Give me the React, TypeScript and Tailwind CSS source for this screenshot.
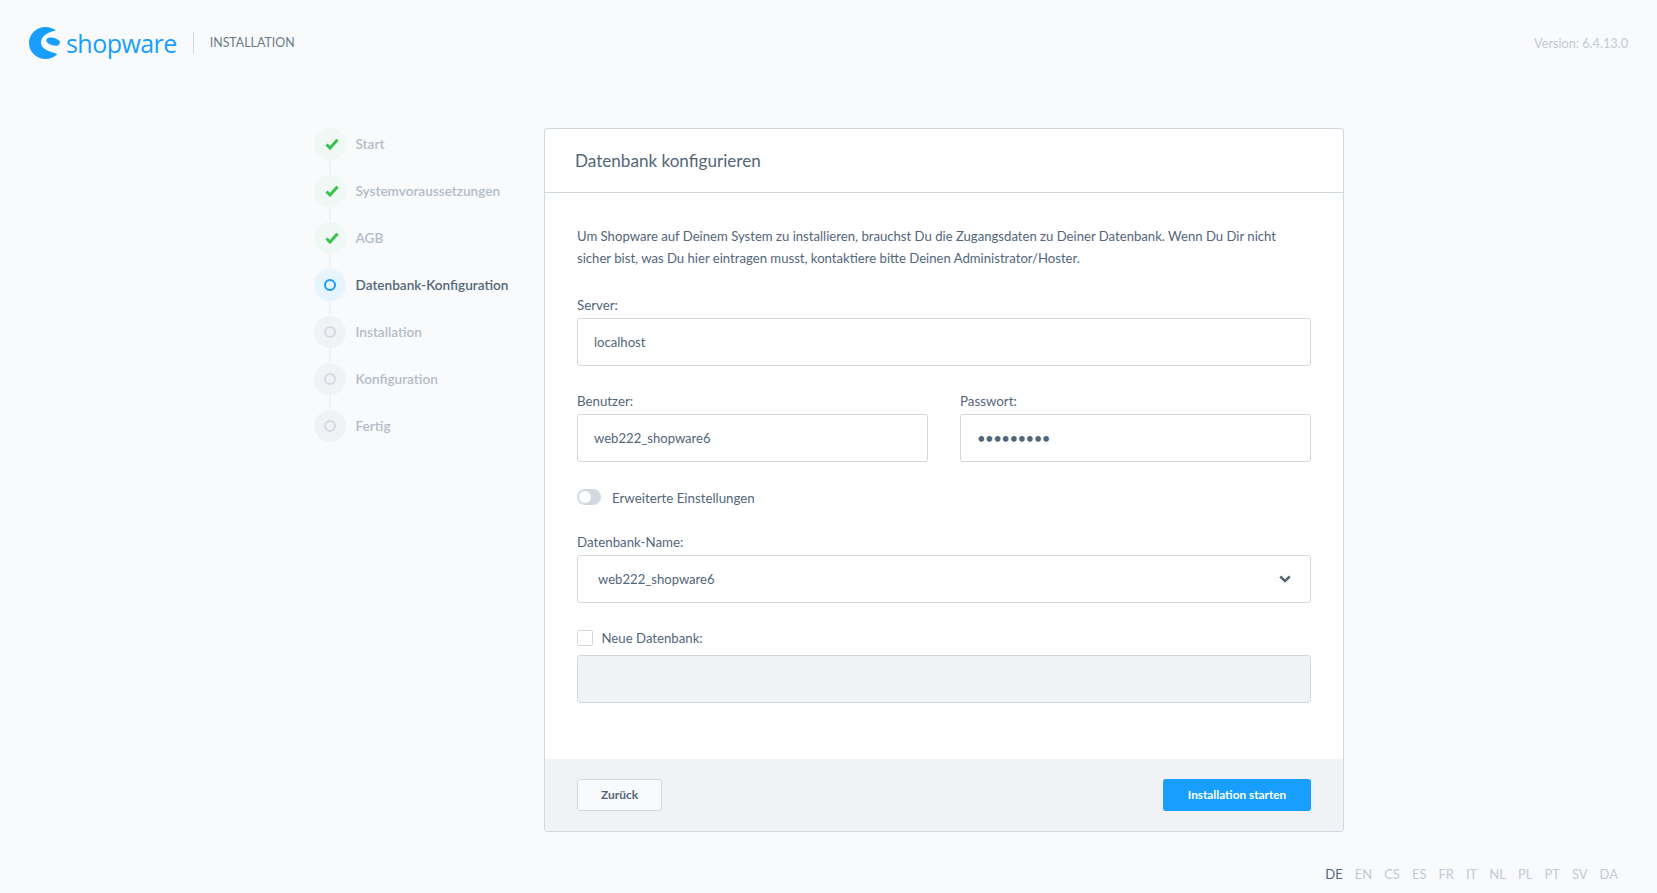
function Step({ label, state, last }: { label: string; state: "done" | "active" | "todo"; last?: boolean }) {
  const halo = state === "done" ? "bg-[#eff8f5]" : state === "active" ? "bg-[#e6f4fd]" : "bg-[#f1f2f5]";
  const text = state === "active" ? "text-[#52667a]" : "text-[#b3bcc9]";
  return (
    <div className="relative flex h-[47px] items-center gap-[9.5px]">
      {!last && <div className="absolute left-[15px] top-[39px] h-[15px] w-[2px] bg-[#f1f2f5]" />}
      <div className={`relative flex h-[32px] w-[32px] shrink-0 items-center justify-center rounded-full ${halo}`}>
        {state === "done" && (
          <svg width="14" height="12" viewBox="0 0 14 12" className="ml-[3px]">
            <path d="M1.5 6.5 L5 10 L12.5 1.8" fill="none" stroke="#37c24f" strokeWidth="3" />
          </svg>
        )}
        {state === "active" && <div className="h-[12px] w-[12px] rounded-full border-2 border-[#189eff] bg-[#e6f4fd]" />}
        {state === "todo" && <div className="h-[12px] w-[12px] rounded-full border-2 border-[#d6dbe2]" />}
      </div>
      <span className={`pt-[1px] text-[13.6px] font-semibold ${text}`}>{label}</span>
    </div>
  );
}

function Field({ label, value, className, dots }: { label: string; value: string; className?: string; dots?: boolean }) {
  return (
    <div className={className}>
      <div className="mb-[3px] h-[20px] text-[13.3px] leading-[20px] text-[#52667a]">{label}</div>
      <div className="flex h-[48px] items-center rounded-[3px] border border-[#d1d9e0] bg-white px-[16px] text-[13.1px] text-[#52667a]">
        {dots ? (
          <span className="text-[15px] tracking-[-0.6px] text-[#52667a]">{value}</span>
        ) : (
          <span className="pt-[1px]">{value}</span>
        )}
      </div>
    </div>
  );
}

export default function App() {
  const steps: [string, "done" | "active" | "todo"][] = [
    ["Start", "done"],
    ["Systemvoraussetzungen", "done"],
    ["AGB", "done"],
    ["Datenbank-Konfiguration", "active"],
    ["Installation", "todo"],
    ["Konfiguration", "todo"],
    ["Fertig", "todo"],
  ];
  const langs = ["EN", "CS", "ES", "FR", "IT", "NL", "PL", "PT", "SV", "DA"];
  return (
    <div className="flex h-[893px] w-full flex-col overflow-hidden bg-[#f9fafc] font-['Lato','Noto_Sans',sans-serif] text-[#52667a]">
      <header className="flex h-[86px] shrink-0 items-center justify-between px-[29px]">
        <div className="flex items-center">
          <svg width="33" height="32" viewBox="0 0 33 32">
            <path
              fill="#189eff"
              d="M27 3.6 C24 1.4 20.5 0 16.5 0 C7.4 0 0 7.2 0 16 C0 24.8 7.4 32 16.5 32 C21 32 25.2 30.2 28.3 27.2 C25 25.5 21 25 17.5 23 C14 21 12 18.5 12 15.5 C12 10 18 5 27 3.6 Z"
            />
            <path
              fill="#189eff"
              d="M19 11 C23 9.8 28 11.6 31 14.2 C31 16.8 29.8 18.8 27.5 18.8 C24 19 20 17.4 18 15.2 C16.8 13.8 17 11.6 19 11 Z"
            />
          </svg>
          <span className="ml-[4px] font-['Open_Sans',sans-serif] text-[25px] font-medium leading-none tracking-[-0.55px] text-[#189eff]">shopware</span>
          <div className="ml-[16px] h-[22px] w-px bg-[#d1d9e0]" />
          <span className="ml-[16px] mt-[1px] text-[12.4px] text-[#6b7a8a]">INSTALLATION</span>
        </div>
        <span className="mt-[1px] text-[12.7px] text-[#c3cad4]">Version: 6.4.13.0</span>
      </header>

      <main className="ml-[314px] mt-[42px] flex items-start">
        <nav className="-mt-[8px] w-[230px] shrink-0">
          {steps.map(([l, s], i) => (
            <Step key={l} label={l} state={s} last={i === steps.length - 1} />
          ))}
        </nav>
        <section className="flex h-[704px] w-[800px] flex-col overflow-hidden rounded-[3px] border border-[#d1d9e0] bg-white">
          <div className="flex h-[64px] shrink-0 items-center border-b border-[#d1d9e0] px-[30px] text-[17.1px] text-[#52667a]">
            Datenbank konfigurieren
          </div>
          <div className="flex-1 px-[32px] pt-[33px]">
            <p className="text-[13.14px] leading-[21.5px] text-[#52667a]">
              Um Shopware auf Deinem System zu installieren, brauchst Du die Zugangsdaten zu Deiner Datenbank. Wenn Du Dir nicht
              <br />
              sicher bist, was Du hier eintragen musst, kontaktiere bitte Deinen Administrator/Hoster.
            </p>
            <Field className="mt-[26px]" label="Server:" value="localhost" />
            <div className="mt-[25px] flex gap-[32px]">
              <Field className="flex-1" label="Benutzer:" value="web222_shopware6" />
              <Field className="flex-1" label="Passwort:" value="•••••••••" dots />
            </div>
            <div className="mt-[25px] flex h-[20px] items-center">
              <div className="flex h-[16px] w-[24px] items-center rounded-full bg-[#d1d9e0] pl-[2px]">
                <div className="h-[12px] w-[12px] rounded-full bg-white" />
              </div>
              <span className="ml-[11px] pt-[3px] text-[13.3px]">Erweiterte Einstellungen</span>
            </div>
            <div className="mt-[25px]">
              <div className="mb-[3px] h-[20px] text-[13.3px] leading-[20px]">Datenbank-Name:</div>
              <div className="flex h-[48px] items-center justify-between rounded-[3px] border border-[#d1d9e0] bg-white pl-[20px] pr-[19px] text-[13.1px]">
                <span className="pt-[1px]">web222_shopware6</span>
                <svg width="12" height="8" viewBox="0 0 12 8">
                  <path d="M1.2 1.5 L6 6 L10.8 1.5" fill="none" stroke="#52667a" strokeWidth="2.4" />
                </svg>
              </div>
            </div>
            <div className="mt-[25px] flex h-[20px] items-center">
              <div className="h-[16px] w-[16px] rounded-[2px] border border-[#d1d9e0] bg-white" />
              <span className="ml-[8.5px] pt-[2px] text-[13.2px]">Neue Datenbank:</span>
            </div>
            <div className="mt-[7px] h-[48px] rounded-[3px] border border-[#d1d9e0] bg-[#f0f2f5]" />
          </div>
          <div className="flex h-[72px] shrink-0 items-center justify-between bg-[#f0f2f5] px-[32px]">
            <div className="flex h-[32px] w-[85px] items-center justify-center rounded-[3px] border border-[#d1d9e0] bg-[#f9fafc] text-[12px] font-bold text-[#52667a]">
              Zurück
            </div>
            <div className="flex h-[32px] w-[148px] items-center justify-center rounded-[3px] bg-[#189eff] text-[11.8px] font-bold text-white">
              Installation starten
            </div>
          </div>
        </section>
      </main>

      <footer className="mt-[33px] flex justify-end gap-[12px] pr-[39px] text-[13px] text-[#c3cad4]">
        <span className="text-[#52667a]">DE</span>
        {langs.map((l) => (
          <span key={l}>{l}</span>
        ))}
      </footer>
    </div>
  );
}
